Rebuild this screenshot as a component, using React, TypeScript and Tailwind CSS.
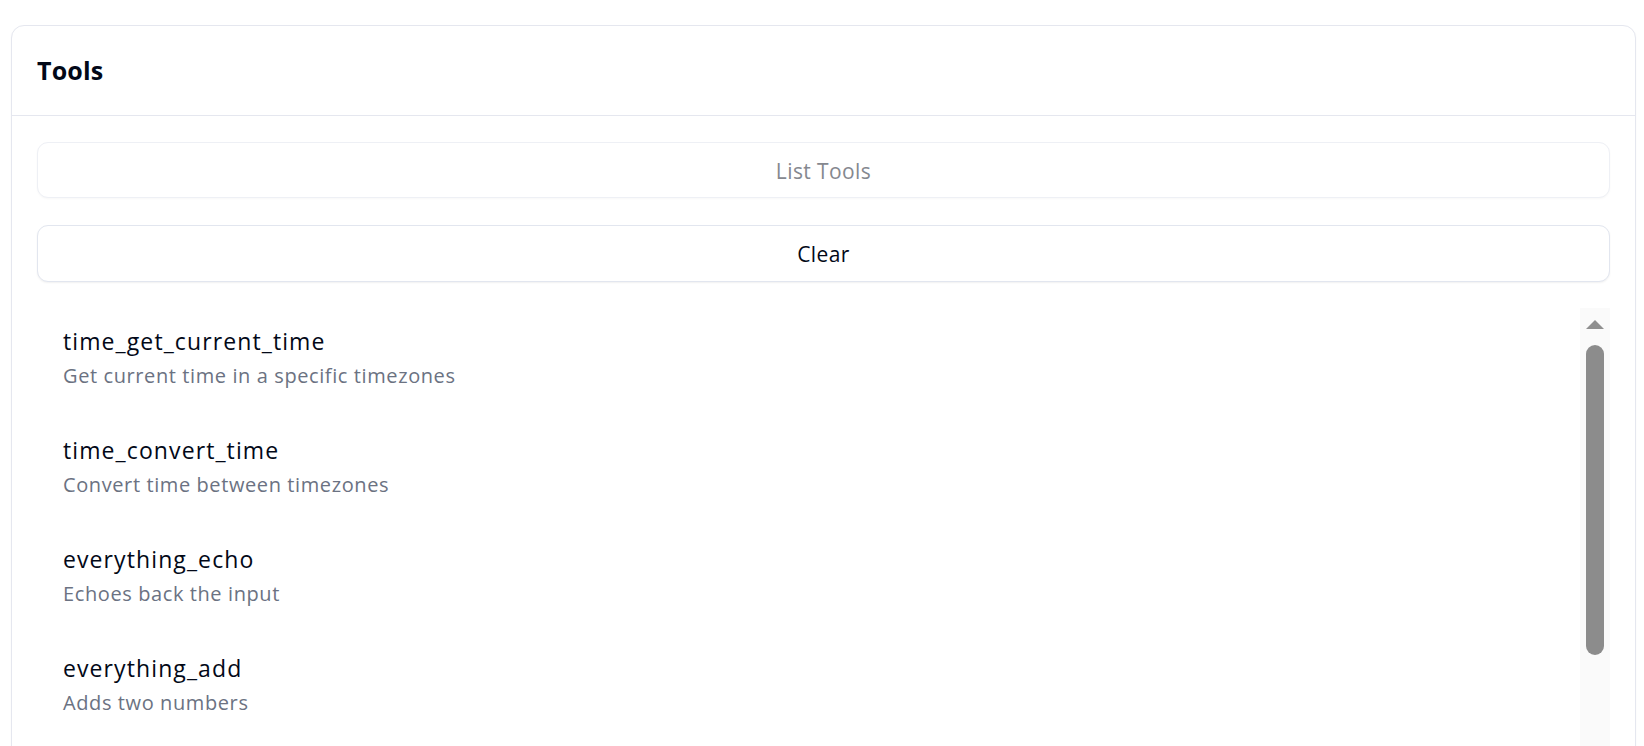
import React from "react";

const tools = [
  { name: "time_get_current_time", desc: "Get current time in a specific timezones" },
  { name: "time_convert_time", desc: "Convert time between timezones" },
  { name: "everything_echo", desc: "Echoes back the input" },
  { name: "everything_add", desc: "Adds two numbers" },
];

export default function App() {
  return (
    <div
      className="h-[746px] w-full overflow-hidden bg-white pt-[25px] pl-[11px]"
      style={{ fontFamily: '"Open Sans", "Noto Sans", sans-serif' }}
    >
      <div className="w-[1625px] h-[760px] rounded-[13px] border border-[#e5e7ef] bg-white shadow-[0_1px_2px_rgba(0,0,0,0.04)] flex flex-col">
        <div className="h-[90px] shrink-0 border-b border-[#e5e7ef] flex items-center px-[25px]">
          <h2 className="text-[25px] font-bold text-[#020817] tracking-[0.2px]">Tools</h2>
        </div>
        <div className="flex-1 min-h-0 flex flex-col px-[25px] pt-[26px]">
          <button className="h-[56px] shrink-0 w-full rounded-[11px] border border-[#eef0f5] bg-white pt-[3px] text-[21px] tracking-[0.4px] text-[#85888f] shadow-[0_1px_2px_rgba(0,0,0,0.03)]">
            List Tools
          </button>
          <button className="mt-[27px] h-[57px] shrink-0 w-full rounded-[11px] border border-[#e2e6ef] bg-white pt-[2px] text-[21px] tracking-[0.4px] text-[#020817] shadow-[0_1px_2px_rgba(0,0,0,0.06)]">
            Clear
          </button>
          <div className="mt-[26px] flex-1 min-h-0 flex overflow-hidden">
            <div className="flex-1 min-w-0 flex flex-col pt-[13px] pl-[26px]">
              {tools.map((t) => (
                <div key={t.name} className="h-[109px] shrink-0 pt-[4px]">
                  <div className="text-[23px] leading-[33px] tracking-[1.1px] text-[#020817] whitespace-nowrap">{t.name}</div>
                  <div className="mt-[3px] text-[20px] leading-[30px] tracking-[0.6px] text-[#6b7282] whitespace-nowrap">{t.desc}</div>
                </div>
              ))}
            </div>
            <div className="w-[30px] shrink-0 bg-[#fafafa] flex flex-col items-center pt-[12px]">
              <svg width="18" height="9" viewBox="0 0 18 9" className="block">
                <polygon points="9,0 18,9 0,9" fill="#8f8f8f" />
              </svg>
              <div className="mt-[16px] w-[18px] h-[310px] rounded-full bg-[#8c8c8c]" />
            </div>
          </div>
        </div>
      </div>
    </div>
  );
}
